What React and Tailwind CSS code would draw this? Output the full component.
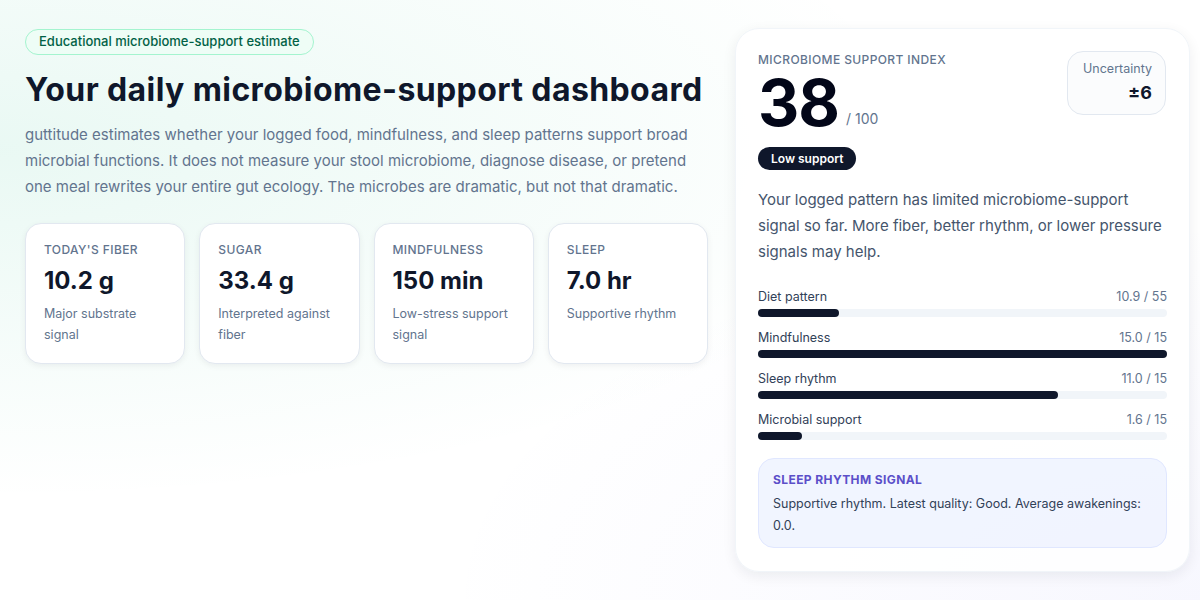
import React from 'react';

const stats = [
    { label: "Today's fiber", value: '10.2 g', note: 'Major substrate signal' },
    { label: 'Sugar', value: '33.4 g', note: 'Interpreted against fiber' },
    { label: 'Mindfulness', value: '150 min', note: 'Low-stress support signal' },
    { label: 'Sleep', value: '7.0 hr', note: 'Supportive rhythm' },
];

const parts = [
    { name: 'Diet pattern', score: 10.9, max: 55 },
    { name: 'Mindfulness', score: 15.0, max: 15 },
    { name: 'Sleep rhythm', score: 11.0, max: 15 },
    { name: 'Microbial support', score: 1.6, max: 15 },
];

const App = () => {
    return (
        <div
            className="min-h-[600px] w-full bg-white bg-[radial-gradient(ellipse_at_0%_25%,rgba(16,185,129,0.09),transparent_55%),radial-gradient(ellipse_at_100%_100%,rgba(99,102,241,0.05),transparent_45%)] font-['Inter',sans-serif] text-slate-900"
        >
            <div className="flex items-start gap-[27px] px-[25px] pt-[28px]">
                {/* Left column */}
                <div className="w-[683px] shrink-0">
                    <span className="inline-flex h-[26px] items-center rounded-full border border-emerald-200 bg-emerald-50/70 px-[13px] text-[13px] font-medium text-emerald-800">
                        Educational microbiome-support estimate
                    </span>
                    <h1 className="mt-[15px] text-[32px] font-bold leading-[40px] tracking-[0.4px] text-slate-900">
                        Your daily microbiome-support dashboard
                    </h1>
                    <p className="mt-[12px] w-[680px] text-[15px] leading-[26px] text-slate-500">
                        guttitude estimates whether your logged food, mindfulness, and sleep patterns support broad microbial functions. It does not measure your stool microbiome, diagnose disease, or pretend one meal rewrites your entire gut ecology. The microbes are dramatic, but not that dramatic.
                    </p>

                    <div className="mt-[23px] grid grid-cols-4 gap-[14px]">
                        {stats.map((s) => (
                            <div
                                key={s.label}
                                className="h-[141px] rounded-2xl border border-slate-200 bg-white px-[18px] pt-[17px] shadow-[0_2px_6px_rgba(15,23,42,0.06)]"
                            >
                                <div className="text-[12px] font-medium uppercase tracking-[0.4px] text-slate-500">{s.label}</div>
                                <div className="mt-[6px] text-[24px] font-bold leading-[32px] text-slate-900">{s.value}</div>
                                <div className="mt-[6px] text-[12.5px] leading-[21px] text-slate-500">{s.note}</div>
                            </div>
                        ))}
                    </div>
                </div>

                {/* Right card */}
                <div className="w-[455px] shrink-0 rounded-3xl border border-slate-100 bg-white/90 px-[22px] pb-[23px] pt-[22px] shadow-[0_4px_14px_rgba(15,23,42,0.07)]">
                    <div className="flex items-start justify-between">
                        <div>
                            <div className="text-[12px] font-medium uppercase tracking-[0.4px] text-slate-500">Microbiome support index</div>
                            <div className="mt-[4px] flex items-end gap-[7px]">
                                <span className="text-[64px] font-bold leading-[60px] tracking-[-1px] text-slate-950">38</span>
                                <span className="mb-[4px] text-[14px] text-slate-500">/ 100</span>
                            </div>
                            <span className="mt-[14px] inline-flex h-[23px] items-center rounded-full bg-slate-900 px-[13px] text-[12px] font-semibold text-white">
                                Low support
                            </span>
                        </div>
                        <div className="mr-[1px] flex h-[64px] w-[99px] flex-col items-end rounded-2xl border border-slate-200 bg-slate-50/60 px-[13px] pt-[8px]">
                            <div className="text-[12.5px] text-slate-500">Uncertainty</div>
                            <div className="mt-[2px] text-[18px] font-bold leading-[24px] text-slate-900">±6</div>
                        </div>
                    </div>

                    <p className="mt-[17px] text-[15px] leading-[26px] text-slate-600">
                        Your logged pattern has limited microbiome-support signal so far. More fiber, better rhythm, or lower pressure signals may help.
                    </p>

                    <div className="mt-[23px] flex flex-col gap-[12px]">
                        {parts.map((p) => (
                            <div key={p.name}>
                                <div className="flex items-center justify-between text-[12.5px] leading-[18px]">
                                    <span className="text-slate-700">{p.name}</span>
                                    <span className="text-slate-500">{p.score.toFixed(1)} / {p.max}</span>
                                </div>
                                <div className="mt-[3px] h-[8px] w-full rounded-full bg-slate-100">
                                    <div className="h-full rounded-full bg-slate-900" style={{ width: `${(p.score / p.max) * 100}%` }} />
                                </div>
                            </div>
                        ))}
                    </div>

                    <div className="mt-[18px] rounded-2xl border border-indigo-100 bg-indigo-50/80 px-[14px] pb-[10px] pt-[12px]">
                        <div className="text-[12px] font-bold uppercase tracking-[0.4px] text-[#5b4fc9]">Sleep rhythm signal</div>
                        <p className="mt-[4px] text-[12.5px] leading-[22px] text-slate-700">
                            Supportive rhythm. Latest quality: Good. Average awakenings: 0.0.
                        </p>
                    </div>
                </div>
            </div>
        </div>
    );
};

export default App;
